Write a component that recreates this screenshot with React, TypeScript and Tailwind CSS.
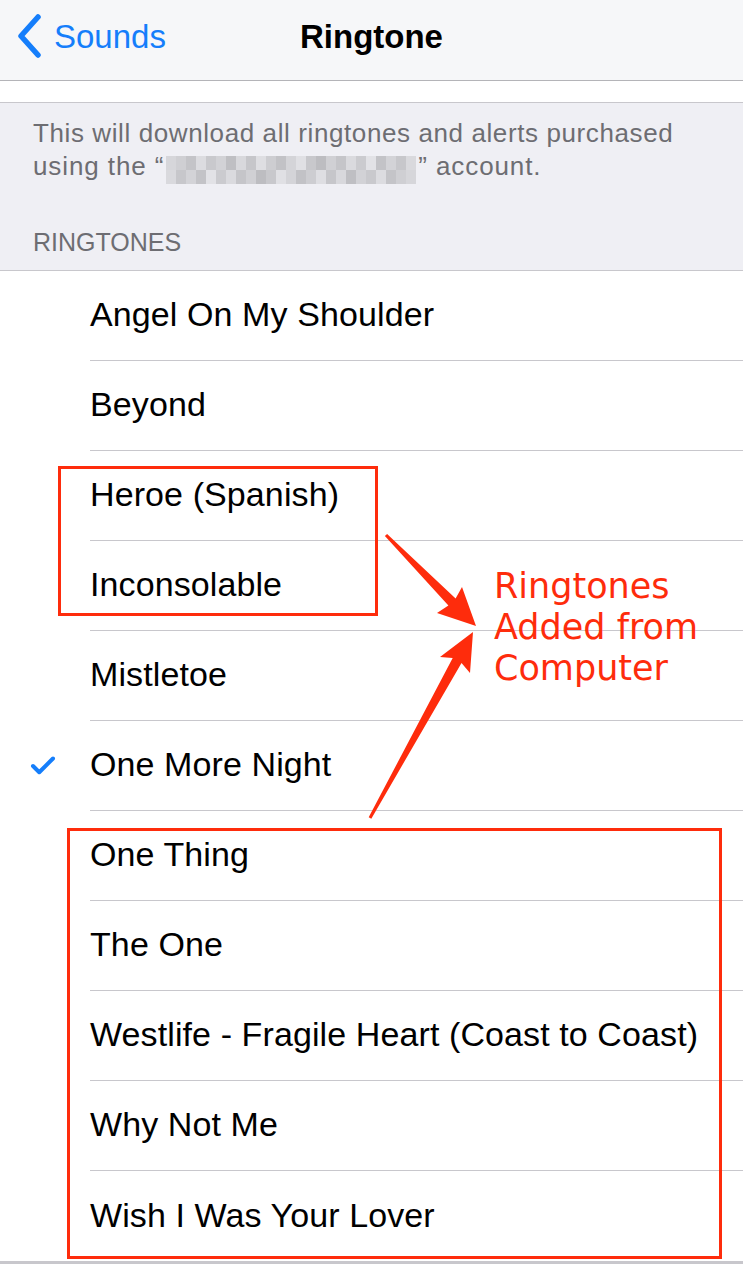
import { Check } from "lucide-react";

const ringtones = [
  "Angel On My Shoulder",
  "Beyond",
  "Heroe (Spanish)",
  "Inconsolable",
  "Mistletoe",
  "One More Night",
  "One Thing",
  "The One",
  "Westlife - Fragile Heart (Coast to Coast)",
  "Why Not Me",
  "Wish I Was Your Lover",
];

const selected = "One More Night";

// pixelated account name
const blurShades = [
  "#d6d6da", "#cfcfd3", "#c4c4c8", "#dcdce0", "#c9c9cd", "#d2d2d6", "#bfbfc3", "#d8d8dc",
  "#c6c6ca", "#dedee2", "#cdcdd1", "#c2c2c6", "#d4d4d8", "#e0e0e4", "#c8c8cc", "#bdbdc1",
  "#d0d0d4", "#c5c5c9", "#dadade", "#cbcbcf", "#e2e2e6", "#c3c3c7", "#d3d3d7", "#c7c7cb",
  "#d9d9dd",
];

function Blurred() {
  return (
    <span className="inline-grid grid-cols-[repeat(25,10px)] grid-rows-[14px_14px] align-[5px] mx-[2px]">
      {blurShades.concat([...blurShades].reverse()).map((c, i) => (
        <span key={i} style={{ backgroundColor: c }} />
      ))}
    </span>
  );
}

export default function App() {
  return (
    <div
      className="relative w-[743px] h-[1286px] bg-white overflow-hidden"
      style={{ fontFamily: '"Liberation Sans", Arial, sans-serif' }}
    >
      {/* nav bar */}
      <div className="relative h-[81px] bg-[#f6f7f9] border-b border-[#b4b4b8] flex items-center justify-center pb-[6px]">
        <div className="absolute left-[16px] top-[14px] flex items-center text-[#157efb]">
          <svg width="28" height="44" viewBox="0 0 28 44" fill="none">
            <path d="M22 3 L5 22 L22 41" stroke="#157efb" strokeWidth="5.5" strokeLinecap="round" strokeLinejoin="round" />
          </svg>
          <span className="ml-[10px] text-[33px] leading-none">Sounds</span>
        </div>
        <span className="text-[33px] font-bold text-black">Ringtone</span>
      </div>

      <div className="h-[22px] bg-white border-b border-[#c8c7cc]" />

      {/* footer note + section header */}
      <div className="h-[168px] bg-[#efeff4] border-b border-[#c8c7cc] px-[33px] pt-[14px] text-[#6d6d72] text-[26px] leading-[33px] tracking-[0.6px]">
        <p>This will download all ringtones and alerts purchased</p>
        <p className="h-[33px] tracking-[0.9px]">
          using the “<Blurred />” account.
        </p>
        <p className="mt-[43px] text-[25px] tracking-normal">RINGTONES</p>
      </div>

      {/* list */}
      <div className="border-b-[3px] border-[#c8c7cc]">
        {ringtones.map((name, i) => (
          <div key={name} className="flex h-[90px]">
            <div className="w-[90px] flex items-center justify-center pr-[4px]">
              {name === selected && <Check size={30} strokeWidth={3.2} className="text-[#157efb]" />}
            </div>
            <div
              className={
                "flex-1 flex items-center text-[34px] tracking-[0.1px] text-black pb-[2px] " +
                (i < ringtones.length - 1 ? "border-b border-[#c8c7cc]" : "")
              }
            >
              {name}
            </div>
          </div>
        ))}
      </div>

      {/* annotations */}
      <div className="absolute left-[58px] top-[466px] w-[320px] h-[150px] border-[3px] border-[#fe2c0c]" />
      <div className="absolute left-[67px] top-[828px] w-[655px] h-[431px] border-[3px] border-[#fe2c0c]" />
      <svg className="absolute left-0 top-0" width="743" height="1286" viewBox="0 0 743 1286">
        <polygon
          fill="#fe2c0c"
          points="387.1,533.9 455.6,598.5 462,587 476,626 437,613 448.4,605.5 384.9,536.1"
        />
        <polygon
          fill="#fe2c0c"
          points="371.3,818.7 461.5,662.9 470,673 473,632 440,657 452.7,658.1 368.7,817.3"
        />
      </svg>
      <div
        className="absolute left-[494px] top-[566px] text-[#fe2c0c] text-[35px] leading-[41px]"
        style={{ fontFamily: '"DejaVu Sans", sans-serif' }}
      >
        <div>Ringtones</div>
        <div>Added from</div>
        <div>Computer</div>
      </div>
    </div>
  );
}
